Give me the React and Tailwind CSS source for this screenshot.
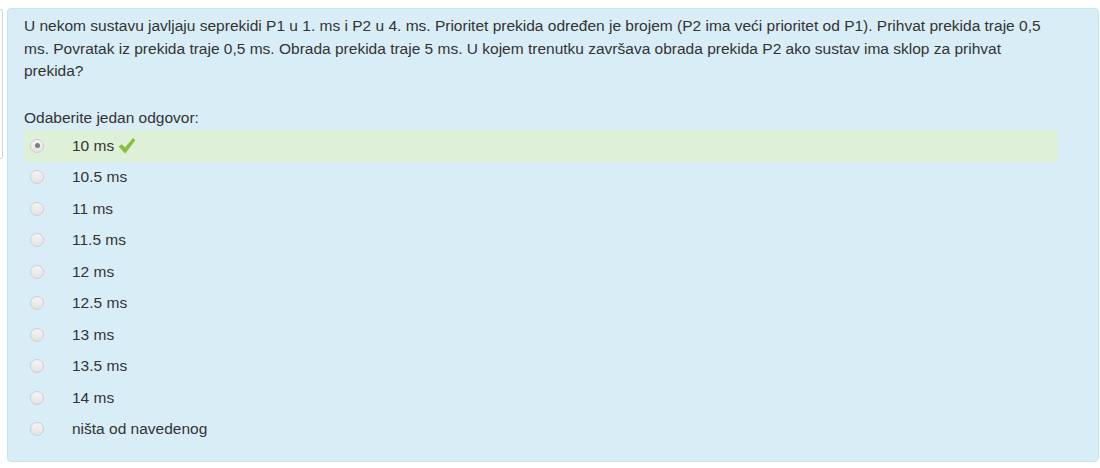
import React from "react";

const answers = [
  "10 ms",
  "10.5 ms",
  "11 ms",
  "11.5 ms",
  "12 ms",
  "12.5 ms",
  "13 ms",
  "13.5 ms",
  "14 ms",
  "ništa od navedenog",
];

function Radio({ checked }) {
  return (
    <div className="w-[14px] h-[14px] rounded-full border border-[#cdcdcd] bg-[linear-gradient(#f5f5f5,#e3e3e3)] flex items-center justify-center shrink-0">
      {checked && <div className="w-[5px] h-[5px] rounded-full bg-[#7d7d7d]" />}
    </div>
  );
}

function Check() {
  return (
    <svg width="18" height="18" viewBox="0 0 18 18" className="ml-[4px] shrink-0">
      <path d="M0.6 9.6 L3.6 7.2 L7 10.6 L15 1 L17.4 3.2 L7.2 16.6 Z" fill="#84bf3c" />
    </svg>
  );
}

export default function App() {
  return (
    <div
      className="w-[1100px] h-[468px] bg-white flex items-start text-[#333]"
      style={{ fontFamily: '"Liberation Sans", Arial, sans-serif' }}
    >
      <div className="w-[3px] h-[150px] mt-[9px] border border-l-0 border-[#d4d4d4] rounded-r-[3px] bg-white shrink-0" />
      <div className="ml-[4px] mt-[8px] w-[1092px] h-[454px] border border-[#bce8f1] bg-[#d9edf7] rounded-[4px] pl-[16px] pt-[6px] shrink-0">
        <div className="w-[1034px] text-[15.5px] leading-[22.5px]">
          U nekom sustavu javljaju seprekidi P1 u 1. ms i P2 u 4. ms. Prioritet prekida određen je brojem (P2 ima veći prioritet od P1). Prihvat prekida traje 0,5 ms. Povratak iz prekida traje 0,5 ms. Obrada prekida traje 5 ms. U kojem trenutku završava obrada prekida P2 ako sustav ima sklop za prihvat prekida?
        </div>
        <div className="mt-[24px] text-[15.5px] leading-[22.5px]">Odaberite jedan odgovor:</div>
        <div className="w-[1034px] mt-[1px]">
          {answers.map((a, i) => (
            <div
              key={a}
              className={`h-[31.5px] flex items-center pl-[6px] ${i === 0 ? "bg-[#dff0d8]" : ""}`}
            >
              <Radio checked={i === 0} />
              <span className="ml-[28px] text-[15.5px] leading-[22.5px]">{a}</span>
              {i === 0 && <Check />}
            </div>
          ))}
        </div>
      </div>
    </div>
  );
}
